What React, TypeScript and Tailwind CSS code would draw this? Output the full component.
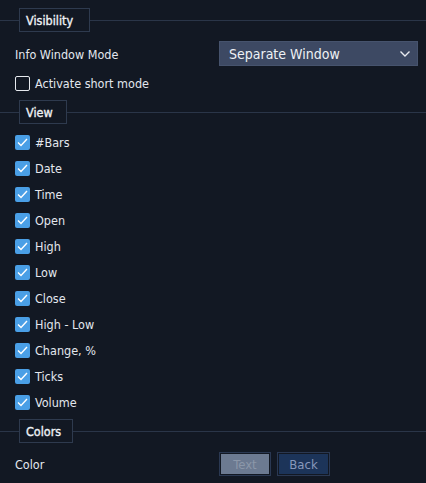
import React from "react";

const font = { fontFamily: '"DejaVu Sans Condensed", "DejaVu Sans", "Liberation Sans", sans-serif' };

function Legend({ label, w }: { label: string; w: string }) {
  return (
    <div className="flex items-center h-6">
      <div className="w-[19px] h-px bg-[#2a3548]" />
      <div className={`${w} h-6 border border-[#2e3a4e] flex items-center pl-[6px] pt-[2px] text-[12.5px] text-[#eef1f5]`} style={{ WebkitTextStroke: "0.35px #eef1f5" }}>
        {label}
      </div>
      <div className="flex-1 h-px bg-[#2a3548]" />
    </div>
  );
}

function Check({ checked }: { checked: boolean }) {
  if (!checked)
    return <div className="w-[15px] h-[15px] rounded-[2px] border border-[#e6e9ee] shrink-0" />;
  return (
    <div className="w-[15px] h-[15px] rounded-[2px] bg-[#4a9fe6] shrink-0 flex items-center justify-center">
      <svg width="11" height="9" viewBox="0 0 11 9" fill="none">
        <path d="M1 4.5 L4 7.5 L10 1" stroke="#ffffff" strokeWidth="1.4" />
      </svg>
    </div>
  );
}

const items = ["#Bars", "Date", "Time", "Open", "High", "Low", "Close", "High - Low", "Change, %", "Ticks", "Volume"];

export default function App() {
  return (
    <div className="w-[426px] h-[483px] bg-[#121823] text-[#e3e7ee] text-[12.5px] pt-2" style={font}>
      <Legend label="Visibility" w="w-[71px]" />
      <div className="flex items-center mt-[9px] h-[25px] pl-[15px] pr-[8px]">
        <div className="flex-1 pt-[4px]">Info Window Mode</div>
        <div className="w-[199px] h-[25px] bg-[#3d4963] border border-[#46536d] flex items-center pl-[9px] pr-[7px]">
          <span className="flex-1 text-[#eef1f5] text-[14px] pt-[2px]">Separate Window</span>
          <svg width="10" height="6" viewBox="0 0 10 6" fill="none">
            <path d="M0.5 0.5 L5 5 L9.5 0.5" stroke="#e8ebf0" strokeWidth="1.4" />
          </svg>
        </div>
      </div>
      <div className="flex items-center gap-[5px] mt-[10px] h-[15px] pl-[15px]">
        <Check checked={false} />
        <span className="pt-[2px]">Activate short mode</span>
      </div>
      <div className="mt-[9px]">
        <Legend label="View" w="w-[48px]" />
      </div>
      <div className="mt-[5px]">
        {items.map((it) => (
          <div key={it} className="flex items-center gap-[5px] h-[26px] pl-[15px]">
            <Check checked />
            <span className="pt-[2px]">{it}</span>
          </div>
        ))}
      </div>
      <div className="mt-[4px]">
        <Legend label="Colors" w="w-[54px]" />
      </div>
      <div className="flex items-center mt-[9px] h-[24px] pl-[15px]">
        <div className="w-[204px] pt-[3px]">Color</div>
        <div className="w-[52px] h-[24px] border border-[#2a3852] p-px mr-[6px]">
          <div className="w-full h-full bg-[#6c7a91] flex items-center justify-center pt-[2px] text-[#8b97a9] text-[13px]">Text</div>
        </div>
        <div className="w-[53px] h-[24px] border border-[#2a3852] p-px">
          <div className="w-full h-full bg-[#1c3459] flex items-center justify-center pt-[2px] text-[#8798bb] text-[13px]">Back</div>
        </div>
      </div>
    </div>
  );
}
